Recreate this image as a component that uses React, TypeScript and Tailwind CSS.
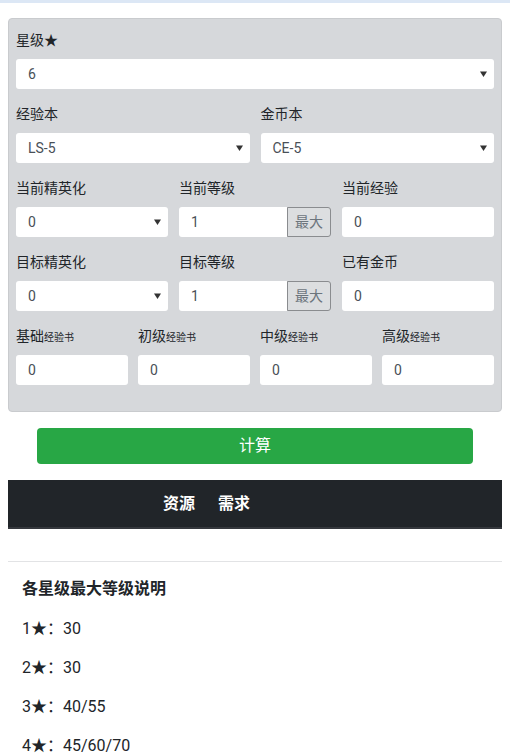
import React from "react";

const FONT = { fontFamily: 'Roboto, "Noto Sans CJK SC", "Noto Sans", sans-serif' };

function Arrow() {
  return (
    <svg width="7" height="6" viewBox="0 0 7 6" className="absolute right-[7px] top-1/2 -translate-y-1/2">
      <path d="M0 0.5h7L3.5 6z" fill="#333" />
    </svg>
  );
}

function Select({ value }: { value: string }) {
  return (
    <div className="relative h-[30px] rounded-[3px] bg-white flex items-center pl-3 text-[14px] text-[#495057]">
      {value}
      <Arrow />
    </div>
  );
}

function Input({ value }: { value: string }) {
  return (
    <div className="h-[30px] rounded-[3px] bg-white flex items-center pl-3 text-[14px] text-[#495057]">{value}</div>
  );
}

function MaxInput({ value }: { value: string }) {
  return (
    <div className="flex h-[30px]">
      <div className="flex-1 rounded-l-[3px] bg-white flex items-center pl-3 text-[14px] text-[#495057]">{value}</div>
      <div className="w-[44px] rounded-r-[3px] border border-[#8a8c8f] bg-[#dcdee0] flex items-center justify-center text-[14px] text-[#6c757d]">
        最大
      </div>
    </div>
  );
}

function Field({ label, small, children }: { label: string; small?: string; children: React.ReactNode }) {
  return (
    <div className="mb-[15px]">
      <div className="h-[21px] mb-[8px] text-[14px] leading-[21px] text-[#212529] whitespace-nowrap">
        {label}
        {small && <span className="text-[10px]">{small}</span>}
      </div>
      {children}
    </div>
  );
}

const LEVELS = ["1★：30", "2★：30", "3★：40/55", "4★：45/60/70"];

export default function App() {
  return (
    <div style={FONT} className="w-[510px] h-[753px] overflow-hidden bg-white text-[#212529]">
      <div className="h-[3px] bg-[#dce7f5]" />
      <div className="px-2 pt-[15px]">
        <div className="rounded-[4px] border border-[#c9cbce] bg-[#d6d8db] px-[7px] pt-[11px] pb-[11px]">
          <Field label="星级★">
            <Select value="6" />
          </Field>
          <div className="grid grid-cols-2 gap-x-[11px]">
            <Field label="经验本">
              <Select value="LS-5" />
            </Field>
            <Field label="金币本">
              <Select value="CE-5" />
            </Field>
          </div>
          <div className="grid grid-cols-3 gap-x-[11px]">
            <Field label="当前精英化">
              <Select value="0" />
            </Field>
            <Field label="当前等级">
              <MaxInput value="1" />
            </Field>
            <Field label="当前经验">
              <Input value="0" />
            </Field>
            <Field label="目标精英化">
              <Select value="0" />
            </Field>
            <Field label="目标等级">
              <MaxInput value="1" />
            </Field>
            <Field label="已有金币">
              <Input value="0" />
            </Field>
          </div>
          <div className="grid grid-cols-4 gap-x-[10px]">
            {["基础", "初级", "中级", "高级"].map((l) => (
              <Field key={l} label={l} small="经验书">
                <Input value="0" />
              </Field>
            ))}
          </div>
        </div>
        <div className="flex justify-center mt-[16px]">
          <button className="w-[436px] h-[36px] rounded-[4px] bg-[#28a745] text-white text-[16px]">计算</button>
        </div>
        <div className="mt-[16px] h-[49px] bg-[#212529] border-b-2 border-[#35383d] flex items-center pl-[155px] gap-[23px] text-white text-[16px] font-bold">
          <span>资源</span>
          <span>需求</span>
        </div>
        <div className="mt-[32px] border-t border-[#e2e3e5]" />
        <div className="px-[14px] pt-[15px]">
          <h5 className="text-[16px] font-bold leading-6 mb-[16px]">各星级最大等级说明</h5>
          {LEVELS.map((t) => (
            <p key={t} className="text-[16px] leading-6 mb-[15px]">
              {t}
            </p>
          ))}
        </div>
      </div>
    </div>
  );
}
